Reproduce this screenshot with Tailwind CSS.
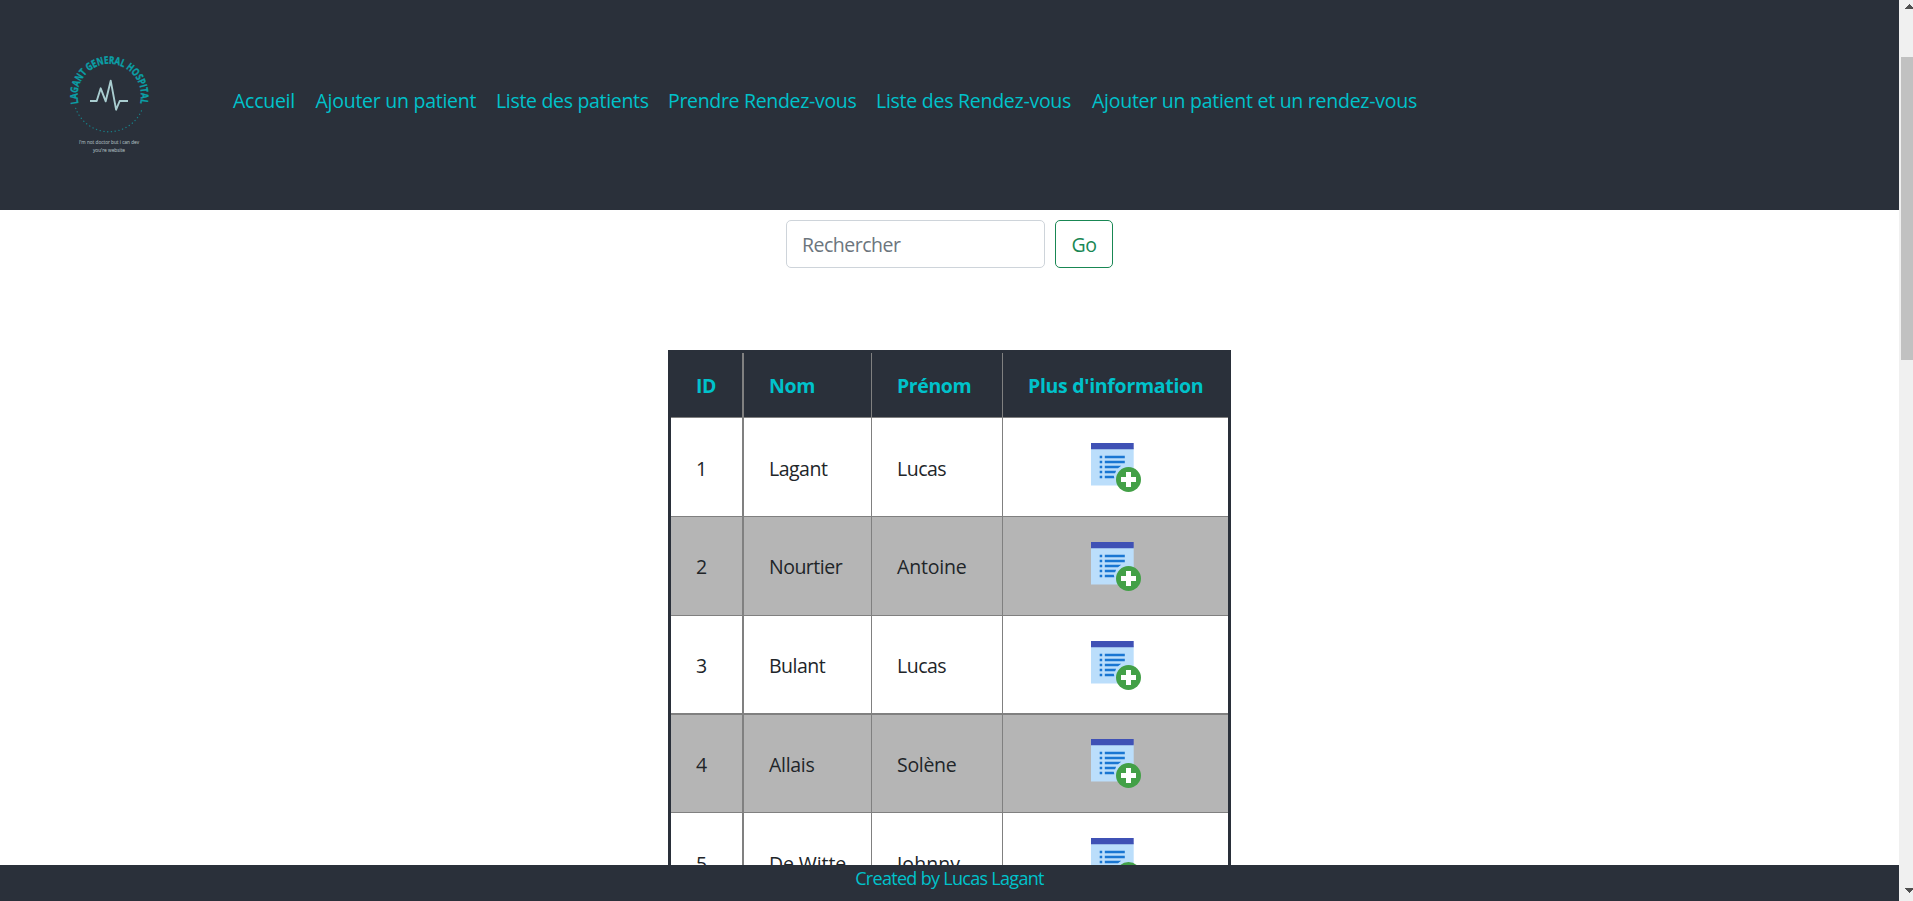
<!DOCTYPE html>
<html lang="fr">
<head>
<meta charset="utf-8">
<title>Lagant General Hospital</title>
<script src="https://cdn.jsdelivr.net/npm/@tailwindcss/browser@4"></script>
</head>
<body class="relative flex h-screen overflow-hidden bg-white font-['Open_Sans',sans-serif] text-[19.5px] leading-[30px] tracking-[-0.5px] text-[#212529]">
<svg class="hidden">
  <symbol id="info" viewBox="0 0 52 50">
    <path fill="#bbdefb" d="M0 5h42.7v37.5H0z"/>
    <path fill="#3f51b5" d="M0 0h42.7v6.3H0z"/>
    <path fill="#1976d2" d="M8.7 12.8h2.5v2.5H8.7zM8.7 17.8h2.5v2.5H8.7zM8.7 22.8h2.5v2.5H8.7zM8.7 27.8h2.5v2.5H8.7zM8.7 32.8h2.5v2.5H8.7zM13.8 12.8h20v2.5h-20zM13.8 17.8h20v2.5h-20zM13.8 22.8h16.4l-3.2 2.5H13.8zM13.8 27.8h11.3l-1 2.5H13.8zM13.8 32.8h9l.5 2.5h-9.5z"/>
    <circle cx="37.5" cy="36.5" r="12.5" fill="#43a047"/>
    <path fill="#fff" d="M35 29h5v5h5v5h-5v5h-5v-5h-5v-5h5z"/>
  </symbol>
</svg>

<div class="flex h-full w-[1899px] flex-col">
  <header class="flex h-[210px] shrink-0 items-center bg-[#2a303a] text-[#00c2cb]">
    <svg class="h-[210px] w-[233px] shrink-0" viewBox="0 0 233 210" fill="none">
      <path id="arc" d="M78.600 103.400A31.700 31.700 0 1 1 140 103.400"/>
      <text font-family="Open Sans, sans-serif" font-size="10.4" font-weight="700" letter-spacing="0" fill="#0aa0a8" stroke="#0aa0a8" stroke-width="0.35"><textPath href="#arc" textLength="115" lengthAdjust="spacingAndGlyphs">LAGANT GENERAL HOSPITAL</textPath></text>
      <path d="M75.7 108.3A35.5 35.5 0 0 0 142.5 108.3" stroke="#177f87" stroke-width="1.3" stroke-linecap="round" stroke-dasharray="0.2 3.6"/>
      <path d="M90 101h6.7l4-12.7 5 13 5-20.6 5.4 29 3.6-8.7H128" stroke="#a9cdd0" stroke-width="1.9" stroke-linejoin="round"/>
      <text x="109" y="144.3" text-anchor="middle" textLength="60" lengthAdjust="spacingAndGlyphs" font-family="Open Sans, sans-serif" font-size="5.4" letter-spacing="0" fill="#98a5aa" stroke="#98a5aa" stroke-width="0.15">I'm not doctor but i can dev</text>
      <text x="109" y="152" text-anchor="middle" textLength="32" lengthAdjust="spacingAndGlyphs" font-family="Open Sans, sans-serif" font-size="5.4" letter-spacing="0" fill="#98a5aa" stroke="#98a5aa" stroke-width="0.15">you're website</text>
    </svg>
    <nav class="flex pb-[9px] tracking-[-0.26px] whitespace-nowrap">
      <a class="w-[82.5px]">Accueil</a>
      <a class="w-[180.5px]">Ajouter un patient</a>
      <a class="w-[172px] tracking-[-0.32px]">Liste des patients</a>
      <a class="w-[208px] tracking-[-0.32px]">Prendre Rendez-vous</a>
      <a class="w-[216px]">Liste des Rendez-vous</a>
      <a>Ajouter un patient et un rendez-vous</a>
    </nav>
  </header>

  <main class="flex min-h-0 flex-1 flex-col items-center overflow-hidden">
    <form class="mt-[10px] flex h-12 w-[327px] shrink-0 gap-[10px]">
      <div class="flex w-[259px] items-center rounded-[5px] border border-[#ced4da] pt-[2px] pl-[15px] text-[#6c757d]">Rechercher</div>
      <button type="button" class="w-[58px] rounded-[5px] border border-[#198754] pt-[2px] text-[#198754]">Go</button>
    </form>
    <div class="mt-[82px] w-[563px] shrink-0 border-3 border-[#2a303a] whitespace-nowrap">
      <div class="flex h-[65px] border-b border-[#808080] bg-[#2a303a] font-bold tracking-[-0.4px] text-[#00c2cb]">
        <div class="flex w-[73px] items-center border-r-2 border-[#808080] pt-[2px] pl-[25px]">ID</div>
        <div class="flex w-[128px] items-center border-r border-[#808080] pt-[2px] pl-[25px]">Nom</div>
        <div class="flex w-[131px] items-center border-r border-[#808080] pt-[2px] pl-[25px]">Prénom</div>
        <div class="flex flex-1 items-center pt-[2px] pl-[25px] tracking-[-0.3px]">Plus d'information</div>
      </div>
      <div class="flex h-[99px] border-b border-[#808080]">
        <div class="flex w-[73px] items-center border-r-2 border-[#808080] pt-1 pl-[25px]">1</div>
        <div class="flex w-[128px] items-center border-r border-[#808080] pt-1 pl-[25px]">Lagant</div>
        <div class="flex w-[131px] items-center border-r border-[#808080] pt-1 pl-[25px]">Lucas</div>
        <div class="flex-1 pt-[25px] pl-[88px]"><svg class="h-[50px] w-[52px]"><use href="#info"/></svg></div>
      </div>
      <div class="flex h-[99px] border-b border-[#808080] bg-[#b5b5b5]">
        <div class="flex w-[73px] items-center border-r-2 border-[#808080] pt-[2px] pl-[25px]">2</div>
        <div class="flex w-[128px] items-center border-r border-[#808080] pt-[2px] pl-[25px]">Nourtier</div>
        <div class="flex w-[131px] items-center border-r border-[#808080] pt-[2px] pl-[25px] tracking-[-0.2px]">Antoine</div>
        <div class="flex-1 pt-[25px] pl-[88px]"><svg class="h-[50px] w-[52px]"><use href="#info"/></svg></div>
      </div>
      <div class="flex h-[99px] border-b-2 border-[#808080]">
        <div class="flex w-[73px] items-center border-r-2 border-[#808080] pt-[2px] pl-[25px]">3</div>
        <div class="flex w-[128px] items-center border-r border-[#808080] pt-[2px] pl-[25px]">Bulant</div>
        <div class="flex w-[131px] items-center border-r border-[#808080] pt-[2px] pl-[25px]">Lucas</div>
        <div class="flex-1 pt-[25px] pl-[88px]"><svg class="h-[50px] w-[52px]"><use href="#info"/></svg></div>
      </div>
      <div class="flex h-[98px] border-b border-[#808080] bg-[#b5b5b5]">
        <div class="flex w-[73px] items-center border-r-2 border-[#808080] pt-[2px] pl-[25px]">4</div>
        <div class="flex w-[128px] items-center border-r border-[#808080] pt-[2px] pl-[25px] tracking-[-0.3px]">Allais</div>
        <div class="flex w-[131px] items-center border-r border-[#808080] pt-[2px] pl-[25px] tracking-[-0.3px]">Solène</div>
        <div class="flex-1 pt-6 pl-[88px]"><svg class="h-[50px] w-[52px]"><use href="#info"/></svg></div>
      </div>
      <div class="flex h-[99px] border-b border-[#808080]">
        <div class="flex w-[73px] items-center border-r-2 border-[#808080] pt-1 pl-[25px]">5</div>
        <div class="flex w-[128px] items-center border-r border-[#808080] pt-1 pl-[25px] tracking-[-0.1px]">De Witte</div>
        <div class="flex w-[131px] items-center border-r border-[#808080] pt-1 pl-[25px]  tracking-[0.1px]">Johnny</div>
        <div class="flex-1 pt-[25px] pl-[88px]"><svg class="h-[50px] w-[52px]"><use href="#info"/></svg></div>
      </div>
    </div>
  </main>

  <footer class="h-9 shrink-0 bg-[#2a303a] text-center text-[18px] leading-[27px] tracking-[-0.7px] text-[#00c2cb]">Created by Lucas Lagant</footer>
</div>

<div class="flex h-full w-[14px] shrink-0 flex-col bg-[#f0f0f0] pl-[2px]">
  <svg class="h-[57px] w-3" viewBox="0 0 12 57" fill="#505050" shape-rendering="crispEdges"><path d="M4 9h9L8.500 4z"/></svg>
  <div class="h-[303px] bg-[#c1c1c1]"></div>
  <svg class="mt-auto h-[20px] w-3" viewBox="0 0 12 20" fill="#505050" shape-rendering="crispEdges"><path d="M4 7h9L8.500 12z"/></svg>
</div>
</body>
</html>
